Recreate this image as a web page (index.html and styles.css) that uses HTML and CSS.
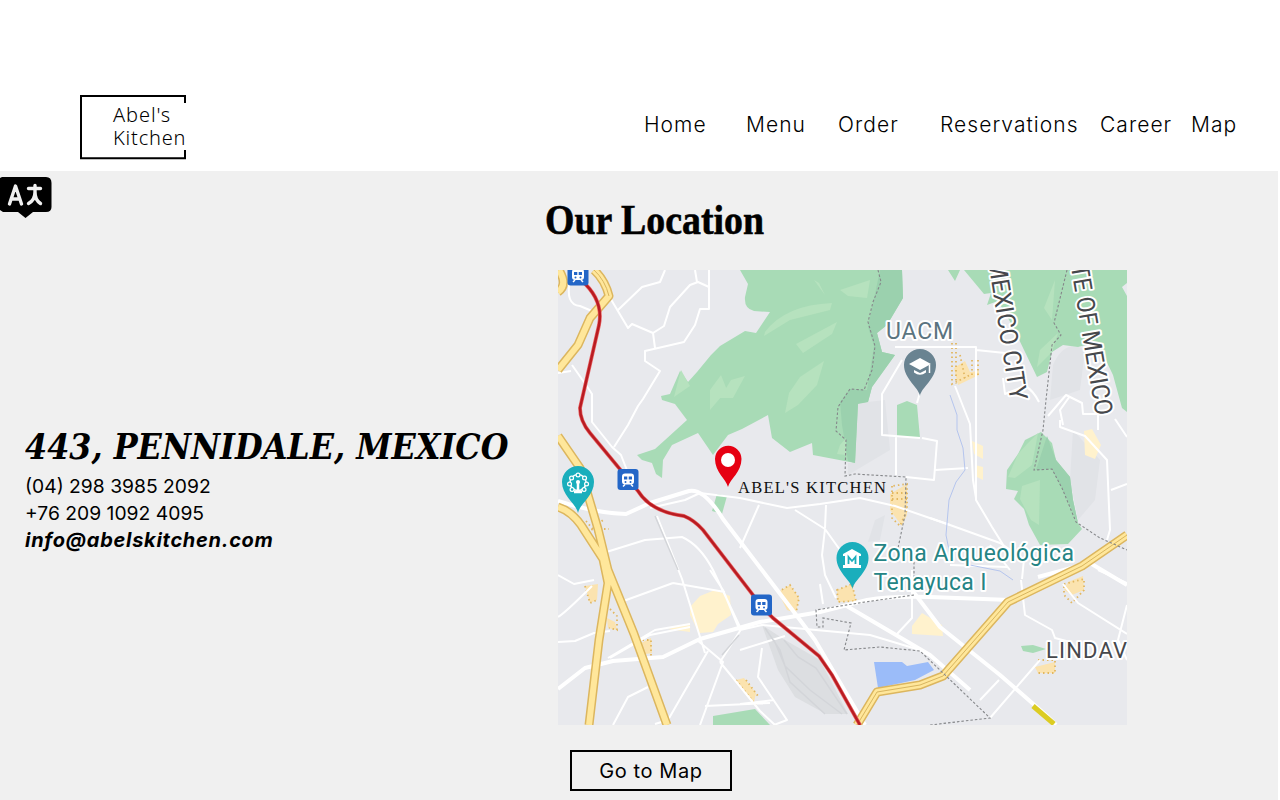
FILE: index.html
```html
<!DOCTYPE html>
<html lang="en">
<head>
<meta charset="utf-8">
<title>Abel's Kitchen</title>
<link rel="stylesheet" href="styles.css">
</head>
<body>
<header class="header">
  <a class="logo">
    <svg class="logo-frame" viewBox="0 0 110 66" width="110" height="66"><path d="M106 9V2H2V64.300H106V56"/></svg>
    <span class="logo-text"><span class="abels">Abel's</span><span>Kitchen</span></span>
  </a>
  <nav class="nav"><a>Home</a><a>Menu</a><a>Order</a><a class="wide">Reservations</a><a class="career">Career</a><a>Map</a></nav>
</header>
<main class="main">
  <section class="contact">
    <svg class="translate" width="53" height="43" viewBox="0 0 53 43">
      <path d="M2 1H46Q51.500 1 51.500 7V31Q51.500 36 46 36H33L25.500 42L18 36H3L0 34V2Z"/>
      <path class="glyph" d="M9.500 28L15.500 10L21.500 28M12 23H19M28.500 12.500H40.500M35 9.500V16Q35 24 28.500 27.500M35 16Q35 24 40.500 27.500"/>
    </svg>
    <address class="address">
      <h2><span>443, PENNIDALE, MEXICO</span></h2>
      <p class="phone">(04) 298 3985 2092</p>
      <p class="phone second">+76 209 1092 4095</p>
      <p class="email">info@abelskitchen.com</p>
    </address>
  </section>
  <section class="location">
    <h1><span>Our Location</span></h1>
    <svg class="map" viewBox="558 270 569 455" width="569" height="455">
      <defs>
        <g id="train"><rect x="-10.500" y="-10.500" width="21" height="21" rx="3" fill="#2366c7"/><path d="M-3 -6H3Q6 -6 6 -3V2Q6 5 3 5H-3Q-6 5 -6 2V-3Q-6 -6 -3 -6Z" fill="#fff"/><path d="M-4 -3H-.7V0H-4ZM.7 -3H4V0H.7Z" fill="#2366c7"/><circle cx="-2.500" cy="2.500" r="1" fill="#2366c7"/><circle cx="2.500" cy="2.500" r="1" fill="#2366c7"/><path d="M-3 5L-5 7M3 5L5 7" stroke="#fff" stroke-width="1.500"/></g>
        <path id="pin" d="M0 31C-1.500 22-16 14-16 0A16 16 0 0 1 16 0C16 14 1.500 22 0 31Z"/>
      </defs>
      <rect x="558" y="270" width="569" height="455" fill="#e8e9ed"/>
      <path fill="#e1e3e7" d="M868 402L858 404L855 463L848 463V475L890 450L885 400ZM1073 430L1100 460L1095 500L1078 520L1070 480ZM1053 365Q1065 338 1085 350L1080 390L1050 400ZM875 520L885 515L880 540L868 542Z"/>
      <path fill="#dcdee1" d="M762 625L785 640L820 660L848 714L826 714L795 697L778 670Z"/>
      <g fill="#a8dbb6">
        <path d="M740 270L748 284L745 297Q744 309 754 311L770 312L756 333L745 331L735 337L720 346L711 355L697 372L688 382L680 371L670 394L661 396L662 400L675 404L687 420L665 440L655 449L637 455L642 460L652 463L656 474L662 478L663 460L672 445L698 433L713 455L728 435L742 429L768 415L772 438L790 452L812 443L813 455L855 463L858 403L868 402L872 387L895 355L882 352L877 333L887 325L903 298L902 270Z"/>
        <path d="M948 270L955 281L960 270ZM964 270L984 294L991 293L987 305L998 301L1012 325L1037 377L1047 372L1052 352L1063 345L1078 347L1097 342L1113 375L1122 408L1127 412V296L1122 287L1127 283V270Z"/>
        <path d="M1041 432L1052 443L1056 460L1070 477L1073 500L1078 523L1082 529L1068 544L1040 545L1029 525L1024 509L1014 499L1018 491L1006 489L1007 470L1018 454L1025 440Z"/>
        <path d="M897 405L907 401L917 405L920 438L897 436ZM717 494L727 496L722 514L712 511ZM713 716L755 709L770 725H713ZM1021 646L1033 645L1046 649L1033 653L1023 651Z"/>
      </g>
      <path fill="#9bd1ae" d="M880 270L902 270L903 298L887 325L877 333L882 352L895 355L872 387L868 402L858 404L855 463L848 461L842 425L840 402L850 389L867 390L874 346L868 327ZM1047 436L1056 460L1070 477L1073 500L1078 523L1062 488L1052 469L1036 470Z"/>
      <g fill="#b6e2be">
        <path d="M765 332Q785 305 832 303L830 310L790 320L764 336ZM796 344L837 322L832 334L803 353ZM840 290L870 280L867 298L848 296ZM800 377L824 361L817 385L798 405L785 413L789 393ZM710 390L721 375L727 390L710 410ZM731 380L745 376L733 398L720 398ZM681 370L690 386L674 397ZM814 280L825 295L819 283ZM1044 308L1055 280L1052 320ZM1040 350L1058 333L1052 352L1037 367ZM1028 443L1038 433L1032 465L1015 478L1008 477L1018 454ZM1022 486L1040 480L1039 525L1031 520L1020 499ZM840 445L846 438V455L837 454Z"/>
      </g>
      <path fill="#9bbcf9" d="M874 662L902 662L907 666L928 662L934 670L915 680L878 688Z"/>
      <g fill="#fff2cd">
        <path d="M690 607L700 596L715 590L730 596L731 615L718 624L713 632L699 633L690 615ZM912 626L922 613L942 625L943 636L912 634ZM972 441L983 446V459L974 454ZM1084 431L1092 429L1101 445L1095 459L1085 455ZM975 465L983 467V480L975 476ZM668 629L690 623V632Z"/>
        <path fill="#fbe3af" d="M778 592L790 585L799 598L796 613L787 610ZM837 590L852 584L856 601L838 602ZM890 494L907 484V515L902 526L890 510ZM954 368L965 361L970 372L979 371V375L958 385ZM585 586L598 584L597 600L590 603ZM607 618L615 622L617 630L608 628ZM637 645L651 638L652 653L640 655ZM736 680L744 678L756 693L754 702ZM1068 582L1083 576L1084 590L1072 595L1064 590ZM1035 667L1055 662V673H1038Z"/>
      </g>
      <g fill="none" stroke="#e2b760" stroke-width="1.800" stroke-dasharray="1.500 3">
        <path d="M778 592L790 585L799 598L796 613M837 590L852 584L856 601L838 602ZM892 486V518L900 526L907 510V484ZM892 493H907M892 499H907M952 343V384L972 374M956 343V384M960 355L965 378M972 360V378M978 360V378M585 586L590 603L597 600M610 609L617 616V630L609 628M638 640H651V656M736 680L756 705M746 680L758 696M1064 584L1084 579V590L1072 603L1064 595ZM1038 660H1055V673H1038M586 521L598 535M588 533L603 520M604 529H609"/>
      </g>
      <g class="roads">
        <path d="M570 280Q565 305 580 306L592 311M609 296L628 328L632 324L653 333L664 326L670 307L690 285L698 282L709 287M709 270V309H700L695 325L684 342L645 351V361L660 371L643 399L638 406L628 425L614 447M618 310L642 287L660 282L665 270M653 333L655 348M695 270L697 282M572 365L586 385L592 394V422L612 447L621 455L628 473M571 371L558 373"/>
        <path class="big" d="M558 501Q595 513 626 514L650 503L689 491Q704 488 723 519L800 620L815 640L865 725M558 689L585 668L613 661L663 657L700 639L760 622L820 612L867 600Q890 596 930 597L1010 600M845 605L930 655L970 690"/>
        <path d="M650 508L685 500L700 493L740 498L787 508L820 504L860 498L895 506L950 525L1000 543L1024 559L1022 579M795 510L825 529L840 550M825 529L822 555L825 575L836 598M825 528L826 505M759 505L740 548M600 554L645 540L682 537Q700 545 713 570L740 627M657 516L682 579L705 653M673 583L725 592M558 575L574 584L594 580M592 586Q565 613 558 617M558 642L575 641L594 633L610 631M610 658L650 635L690 627M608 658L655 630L690 624M618 603L673 583M720 662L740 631L723 590M720 662L760 711L775 725M723 590L710 570M697 640L723 662L700 725M708 651L687 687L668 720L655 724M705 706L770 703M648 687L628 697L613 725M740 650L785 636M740 630L762 625L870 635L920 650M762 648L758 677L787 720L774 725M740 704L774 700"/>
        <path d="M895 347H976V426M902 360L882 394V435L920 438M917 403L926 371M896 437V475M922 438L937 441L934 480L906 477M976 350L1005 353M976 425V500L992 527L1012 559M955 386L970 424L973 480L976 498M935 470L968 468M1048 416L1066 395L1082 403L1083 414H1098V430M1063 425L1060 410L1070 396M1060 420V427L1085 436L1107 460L1110 530L1107 540M1111 490L1127 484M1115 419L1127 437M1039 402Q1033 390 1025 386L1005 394L1003 378M930 518L950 525M820 584L823 604M912 570L912 618L897 634M990 545L1010 570M1007 567L950 565M1021 580L1025 615L1052 630L1055 638L1070 642M1063 584L1078 603L1127 634M1127 605L1118 640L1127 660M1098 570L1127 583M1040 660L990 718M999 680L980 700"/>
      </g>
      <path class="big roads" d="M912 590L940 627L1000 675L1047 716L1056 725M1038 577L1090 563L1127 585"/>
      <g class="yellow-edge"><path d="M559 270Q568 285 558 292M594 270Q605 280 609 296L590 318L578 345L558 370M558 436L580 468L598 529L608 570L634 634L667 725M558 507Q571 511 581 525L603 559L608 583L599 640L589 725"/><path d="M1127 535L1082 566L1008 602L943 676L920 685L877 692L857 725"/></g>
      <g class="yellow"><path d="M559 270Q568 285 558 292M594 270Q605 280 609 296L590 318L578 345L558 370M558 436L580 468L598 529L608 570L634 634L667 725M558 507Q571 511 581 525L603 559L608 583L599 640L589 725"/><path d="M1127 535L1082 566L1008 602L943 676L920 685L877 692L857 725"/></g>
      <path class="yellow-line" d="M594 270Q605 280 609 296M1127 535L1082 566L1008 602L943 676L920 685L877 692L857 725"/>
      <path d="M1033 706L1054 724" stroke="#dccc22" stroke-width="5"/>
      <path d="M950 395L957 415V430L963 448L965 470L956 482L949 500L946 535L950 555M970 565L1000 571L1013 580" fill="none" stroke="#b5c5ee" stroke-width="1"/>
      <path class="border" d="M878 270L881 282L873 302L868 322L875 346L872 370L864 390L850 389L838 407L836 431L846 440L845 476L855 474L906 477L905 515L898 548M914 562V583M914 595L865 602L816 610L817 627H823V618L851 623L844 650L880 647L920 651L990 718L930 725M1067 270L1054 323L1061 335L1052 345L1046 400L1043 430L1034 470L1052 469L1062 488L1076 522L1100 538L1127 550"/>
      <g fill="none" stroke="#d3d5d9" stroke-width="1.500"><path d="M765 628L780 650L790 682L825 714M774 640L785 666L810 690L842 714M784 640L798 657L816 668L847 714M655 516L678 570M722 655L739 635"/></g>
      <path d="M581 280Q604 300 599 325L580 408Q580 421 590 433L638 491Q651 512 684 516Q694 520 703 530L763 608L773 618L819 656L832 675L860 725" fill="none" stroke="#e86464" stroke-width="3.800"/>
      <path d="M581 280Q604 300 599 325L580 408Q580 421 590 433L638 491Q651 512 684 516Q694 520 703 530L763 608L773 618L819 656L832 675L860 725" fill="none" stroke="#b91c22" stroke-width="2.500"/>
      <use href="#train" x="578" y="275"/><use href="#train" x="628" y="479.500"/><use href="#train" x="761.500" y="605"/>
      <use href="#pin" x="578" y="482" fill="#1aaebc"/><circle cx="578" cy="482.500" r="8" fill="none" stroke="#fff" stroke-width="1.500"/><path d="M578 481V492M574 492H582" stroke="#fff" stroke-width="2.500"/><circle cx="578" cy="482" r="2" fill="#fff"/><path d="M569.500 484h.1M571.500 478h.1M578 475h.1M584.500 478h.1M586.500 484h.1M584 489.500h.1M572 489.500h.1" stroke="#fff" stroke-width="5" stroke-linecap="round"/><path d="M569.500 484h.1M571.500 478h.1M578 475h.1M584.500 478h.1M586.500 484h.1M584 489.500h.1M572 489.500h.1" stroke="#1aaebc" stroke-width="2.500" stroke-linecap="round"/>
      <use href="#pin" x="920" y="365" fill="#698391"/><path d="M909 364L920 358L931 364L920 370Z" fill="#fff"/><path d="M914 370L920 373L926 370V372.500Q920 377 914 372.500Z" fill="#fff"/><path d="M929.500 365V373" stroke="#fff" stroke-width="1.500"/>
      <use href="#pin" x="852.500" y="558" fill="#1aaebc"/><path d="M843 554L852 549L861 554V556H859V565H861V568H843V565H845V556H843Z" fill="#fff"/><path d="M848.500 564V557L852 561L855.500 557V564" fill="none" stroke="#1aaebc" stroke-width="1.800"/>
      <path d="M728 487C726 479 715 472 715 459A13 13 0 0 1 741.500 459C741.500 472 730 479 728 487Z" fill="#e60012"/><circle cx="728" cy="460" r="7" fill="#fff"/>
      <g class="label">
        <text x="886" y="338.500" class="uacm" textLength="67">UACM</text>
        <text x="873.500" y="561" class="zona" textLength="200.500">Zona Arqueológica</text>
        <text x="873.500" y="590" class="zona" textLength="113">Tenayuca I</text>
        <text x="1046" y="657.500" class="dark small" textLength="81">LINDAV</text>
        <text transform="translate(988 260) rotate(81)" class="dark city" textLength="143" lengthAdjust="spacingAndGlyphs">MEXICO CITY</text>
        <text transform="translate(1064 226) rotate(80.500)" class="dark city" textLength="193" lengthAdjust="spacingAndGlyphs">STATE OF MEXICO</text>
      </g>
      <text x="738" y="493" class="kitchen" textLength="148">ABEL'S KITCHEN</text>
    </svg>
    <a class="button">Go to Map</a>
  </section>
</main>
</body>
</html>
```
FILE: styles.css
```css
* { box-sizing: border-box; }
body { margin: 0; width: 1280px; height: 800px; overflow: hidden; background: #fff; color: #000; font-family: Inter, sans-serif; }
.header { height: 171px; padding: 94px 0 0 79px; display: flex; align-items: flex-start; }
.logo { display: grid; width: 565px; height: 66px; flex: none; }
.logo > * { grid-area: 1 / 1; }
.logo-frame path { fill: none; stroke: #000; stroke-width: 2; }
.logo-text { display: flex; flex-direction: column; margin: 9px 0 0 34px; font: 350 20px/23px "Noto Sans", sans-serif; letter-spacing: .8px; }
.abels { letter-spacing: .9px; }
.nav { display: grid; grid-template-columns: 102px 92px 102px 160px 91px 50px; padding-top: 18px; font-size: 21px; line-height: 26px; font-weight: 300; letter-spacing: 1.05px; white-space: nowrap; }
.main { width: 1278px; height: 629px; display: grid; grid-template-columns: 545px 1fr; background: #f0f0f0; }
.translate { display: block; margin-top: 5px; }
.translate .glyph { fill: none; stroke: #f0f0f0; stroke-width: 3.4; stroke-linecap: round; stroke-linejoin: round; }
.address { margin: 208px 0 0 25px; font-style: normal; white-space: nowrap; }
.address h2 { margin: 0; height: 46px; font: italic bold 35px/40px "DejaVu Serif", serif; }
.address h2 span, .location h1 span { display: inline-block; transform-origin: left center; }
.address h2 span { transform: scaleX(.91); }
.address p { margin: 0; font-size: 19.3px; line-height: 27px; }
.address .email { font-size: 20px; font-weight: 700; font-style: italic; letter-spacing: .72px; }
.location h1 { margin: 0; padding-top: 24px; height: 99px; font: bold 43px/50px "Liberation Serif", serif; white-space: nowrap; }
.location h1 span { transform: scaleX(.88); -webkit-text-stroke: .6px #000; }
.map { display: block; margin-left: 13px; }
.button { display: flex; align-items: center; justify-content: center; width: 162px; height: 41px; margin: 25px 0 0 25px; border: 2px solid #000; font-size: 20px; letter-spacing: .6px; }
.roads { fill: none; stroke: #fff; stroke-width: 2; stroke-linejoin: round; }
.big { stroke-width: 4; }
.yellow-edge, .yellow, .yellow-line { fill: none; stroke-linejoin: round; }
.yellow-edge { stroke: #dcb65e; stroke-width: 9; }
.yellow { stroke: #ffe79b; stroke-width: 6; }
.yellow-line { stroke: #d8b55f; stroke-width: 1; }
.border { fill: none; stroke: #85878a; stroke-width: 1.1; stroke-dasharray: 2.5 2; }
.label text { font-family: Roboto, sans-serif; stroke: #fff; stroke-width: 4; stroke-linejoin: round; paint-order: stroke; }
.uacm { font-size: 23px; fill: #5b7480; }
.zona { font-size: 23px; fill: #258484; }
.label .dark { fill: #46484c; }
.small { font-size: 22px; }
.city { font-size: 25px; }
.kitchen { font: 16.5px "Liberation Serif", serif; fill: #111; }
```
